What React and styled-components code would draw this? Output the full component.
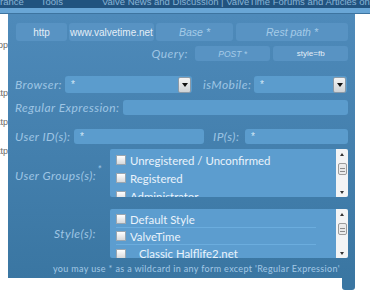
import React from "react";
import styled, { createGlobalStyle } from "styled-components";

const GlobalStyle = createGlobalStyle`
  body {
    margin: 0;
    background: #ffffff;
    overflow: hidden;
  }
`;

const Page = styled.div`
  width: 370px;
  height: 300px;
  overflow: hidden;
  font-family: "Liberation Sans", Arial, sans-serif;
`;

const TopBar = styled.div`
  height: 8px;
  background: #21537f;
  overflow: hidden;
  white-space: nowrap;
  display: flex;
  font-size: 9.5px;
  color: #88b3d6;
`;

const TopItem = styled.span`
  margin-top: -4px;
  line-height: 11px;
  margin-left: ${(p) => p.$ml || 0}px;
`;

const SubBar = styled.div`
  height: 5px;
  background: #69a6d6;
  border-bottom: 1px solid #3d74a0;
`;

const Main = styled.div`
  display: flex;
`;

const Gutter = styled.div`
  width: 8px;
  overflow: hidden;
  display: flex;
  flex-direction: column;
  align-items: flex-end;
  font-size: 9px;
  color: #6a6a6a;
  line-height: 10px;
`;

const Frag = styled.span`
  margin-top: ${(p) => p.$mt}px;
  white-space: nowrap;
`;

const Column = styled.div`
  width: 347px;
  display: flex;
  flex-direction: column;
`;

const Panel = styled.div`
  height: 264px;
  box-sizing: border-box;
  padding: 9px 7px 0 7px;
  background: linear-gradient(#4e8aba, #3a76a2);
  display: flex;
  flex-direction: column;
`;

const Tab = styled.div`
  align-self: flex-end;
  width: 13px;
  height: 12px;
  background: #3a76a2;
  border-radius: 0 0 3px 3px;
`;

const Row = styled.div`
  display: flex;
  align-items: center;
  gap: ${(p) => p.$gap || 0}px;
  margin-top: ${(p) => p.$mt || 0}px;
`;

const UrlBox = styled.div`
  width: ${(p) => p.$w}px;
  height: 18px;
  margin-left: ${(p) => p.$ml || 0}px;
  border-radius: 3px;
  background: #5893c3;
  display: flex;
  align-items: center;
  justify-content: center;
  font-size: ${(p) => p.$fs || 10}px;
  font-style: ${(p) => (p.$italic ? "italic" : "normal")};
  color: ${(p) => (p.$italic ? "#a5cbe8" : "#e4eef7")};
  white-space: nowrap;
`;

const SmallBox = styled(UrlBox)`
  height: 15px;
`;

const Label = styled.div`
  width: ${(p) => p.$w}px;
  flex-shrink: 0;
  margin-left: ${(p) => p.$ml || 0}px;
  padding-right: ${(p) => p.$pr || 0}px;
  box-sizing: border-box;
  text-align: ${(p) => (p.$right ? "right" : "left")};
  font-family: Lato, "DejaVu Sans", sans-serif;
  font-style: italic;
  font-size: 12px;
  letter-spacing: 0.45px;
  color: #9ec5e4;
  white-space: nowrap;
`;

const Sup = styled.sup`
  font-size: 11px;
  vertical-align: 6px;
  margin-left: 1px;
`;

const Input = styled.div`
  width: ${(p) => (p.$w ? `${p.$w}px` : "auto")};
  flex: ${(p) => (p.$w ? "none" : "1")};
  height: ${(p) => p.$h || 15}px;
  border-radius: 3px;
  background: #5b9ccd;
  box-sizing: border-box;
  padding: 0 6px;
  display: flex;
  align-items: center;
  justify-content: space-between;
  font-size: 10px;
  color: #d2e6f5;
`;

const Arrow = styled.div`
  width: 11px;
  height: 14px;
  margin-right: -5px;
  border: 1px solid #8a9aa8;
  border-radius: 2px;
  background: linear-gradient(#f4f4f4, #cfd3d6);
  display: flex;
  align-items: center;
  justify-content: center;
  &::after {
    content: "";
    border-left: 3px solid transparent;
    border-right: 3px solid transparent;
    border-top: 4px solid #111;
  }
`;

const ListBox = styled.div`
  flex: 1;
  height: ${(p) => p.$h}px;
  background: #5c9dcf;
  border-radius: 2px;
  display: flex;
  overflow: hidden;
`;

const Items = styled.div`
  flex: 1;
  padding: 2px 0 0 6px;
  display: flex;
  flex-direction: column;
`;

const Item = styled.div`
  height: ${(p) => p.$h}px;
  flex-shrink: 0;
  display: flex;
  align-items: center;
  margin-right: 20px;
  border-bottom: ${(p) => (p.$line ? "1px solid #6badde" : "none")};
  box-sizing: border-box;
  font-family: Lato, "Open Sans", sans-serif;
  font-size: 11.4px;
  color: #eaf3fb;
  white-space: nowrap;
`;

const Check = styled.span`
  width: 8px;
  height: 8px;
  flex-shrink: 0;
  border: 1px solid #9aa6b0;
  background: linear-gradient(#ffffff, #d6d9dc);
  margin-right: ${(p) => p.$gap || 4}px;
`;

const Scroll = styled.div`
  width: 12px;
  background: #f3f4f5;
  display: flex;
  flex-direction: column;
  align-items: center;
  justify-content: space-between;
  padding: 4px 0 3px;
  box-sizing: border-box;
`;

const ScrollUp = styled.span`
  border-left: 2px solid transparent;
  border-right: 2px solid transparent;
  border-bottom: 3px solid #333;
`;

const ScrollDown = styled.span`
  border-left: 2px solid transparent;
  border-right: 2px solid transparent;
  border-top: 3px solid #333;
`;

const Thumb = styled.span`
  width: 9px;
  height: 12px;
  margin-top: -10px;
  border: 1px solid #9c9c9c;
  border-radius: 2px;
  box-sizing: border-box;
  background: repeating-linear-gradient(#e9e9e9 0 2px, #8c8c8c 2px 3px) center / 5px 6px no-repeat, #ececec;
`;

const Note = styled.div`
  margin-top: 5px;
  padding-left: 38px;
  font-family: Lato, "DejaVu Sans", sans-serif;
  font-size: 9px;
  letter-spacing: 0.35px;
  color: #a3c8e5;
  white-space: nowrap;
`;

function List({ items, h, itemH, lines }) {
  return (
    <ListBox $h={h}>
      <Items>
        {items.map((it, i) => (
          <Item key={it.text} $h={itemH} $line={lines && i < items.length - 1}>
            <Check $gap={it.gap} />
            {it.text}
          </Item>
        ))}
      </Items>
      <Scroll>
        <ScrollUp />
        <Thumb />
        <ScrollDown />
      </Scroll>
    </ListBox>
  );
}

export default function App() {
  return (
    <Page>
      <GlobalStyle />
      <TopBar>
        <TopItem>rance</TopItem>
        <TopItem $ml={17}>Tools</TopItem>
        <TopItem $ml={39}>
          Valve News and Discussion | ValveTime Forums and Articles on Steam Community
        </TopItem>
      </TopBar>
      <SubBar />
      <Main>
        <Gutter>
          <Frag $mt={26}>Prop</Frag>
          <Frag $mt={38}>http</Frag>
          <Frag $mt={19}>http</Frag>
          <Frag $mt={19}>http</Frag>
        </Gutter>
        <Column>
          <Panel>
            <Row $gap={2}>
              <UrlBox $w={51} $ml={1}>http</UrlBox>
              <UrlBox $w={85}>www.valvetime.net</UrlBox>
              <UrlBox $w={77} $italic $fs={10.5}>Base *</UrlBox>
              <UrlBox $w={112} $ml={1} $italic $fs={10.5}>Rest path *</UrlBox>
            </Row>
            <Row $mt={5} $gap={3}>
              <Label $w={177} $right $pr={4}>Query:</Label>
              <SmallBox $w={77} $italic $fs={8.5}>POST *</SmallBox>
              <SmallBox $w={76} $fs={8}>style=fb</SmallBox>
            </Row>
            <Row $mt={15}>
              <Label $w={50}>Browser:</Label>
              <Input $w={127} $h={17}>
                *<Arrow />
              </Input>
              <Label $w={51} $ml={11}>isMobile:</Label>
              <Input $w={93} $h={17}>
                *<Arrow />
              </Input>
            </Row>
            <Row $mt={7}>
              <Label $w={108}>Regular Expression:</Label>
              <Input />
            </Row>
            <Row $mt={14}>
              <Label $w={59}>User ID(s):</Label>
              <Input $w={130}>*</Input>
              <Label $w={32} $ml={9}>IP(s):</Label>
              <Input>*</Input>
            </Row>
            <Row $mt={5}>
              <Label $w={95}>
                User Groups(s):<Sup>*</Sup>
              </Label>
              <List
                h={48}
                itemH={18}
                items={[
                  { text: "Unregistered / Unconfirmed" },
                  { text: "Registered" },
                  { text: "Administrator" },
                ]}
              />
            </Row>
            <Row $mt={12}>
              <Label $w={95} $right $pr={14}>Style(s):</Label>
              <List
                h={49}
                itemH={17}
                lines
                items={[
                  { text: "Default Style" },
                  { text: "ValveTime" },
                  { text: "Classic Halflife2.net", gap: 13 },
                ]}
              />
            </Row>
            <Note>you may use * as a wildcard in any form except 'Regular Expression'</Note>
          </Panel>
          <Tab />
        </Column>
      </Main>
    </Page>
  );
}
